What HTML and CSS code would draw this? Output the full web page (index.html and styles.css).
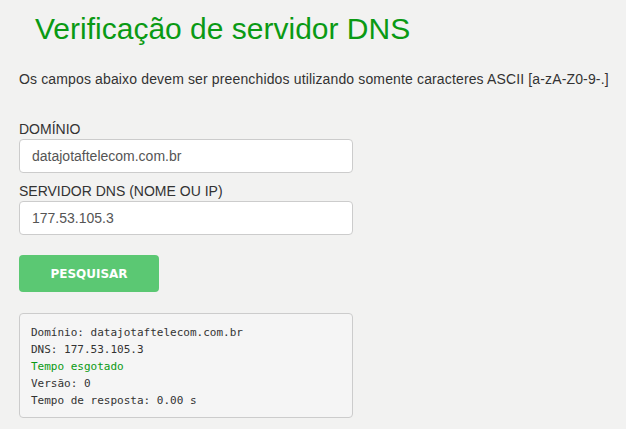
FILE: index.html
```html
<!DOCTYPE html>
<html lang="pt-BR">
<head>
  <meta charset="UTF-8">
  <meta name="viewport" content="width=device-width, initial-scale=1.0">
  <title>Verificação de servidor DNS</title>
  <link rel="stylesheet" href="styles.css">
</head>
<body>
  <h1 class="title">Verificação de servidor DNS</h1>
  <p class="intro">Os campos abaixo devem ser preenchidos utilizando somente caracteres ASCII [a-zA-Z0-9-.]</p>

  <form class="dns-form">
    <label class="field-label" for="domain">DOMÍNIO</label>
    <input class="field-input" id="domain" type="text" value="datajotaftelecom.com.br">

    <label class="field-label" for="server">SERVIDOR DNS (NOME OU IP)</label>
    <input class="field-input" id="server" type="text" value="177.53.105.3">

    <button class="btn-search" type="button">PESQUISAR</button>
  </form>

  <pre class="result">Domínio: datajotaftelecom.com.br
DNS: 177.53.105.3
<span class="result-status">Tempo esgotado</span>
Versão: 0
Tempo de resposta: 0.00 s</pre>
</body>
</html>
```

FILE: styles.css
```css
body {
  margin: 0;
  padding: 0 0 0 19px;
  background: #f2f2f1;
  font-family: "Liberation Sans", Arial, sans-serif;
  color: #333;
}

.title {
  margin: 0;
  padding: 12px 0 0 16px;
  font-size: 30px;
  font-weight: normal;
  line-height: 34px;
  color: #0a9a14;
}

.intro {
  margin: 23px 0 0;
  font-size: 14px;
  line-height: 20px;
  letter-spacing: 0.14px;
  white-space: nowrap;
}

.dns-form {
  margin-top: 30px;
  width: 334px;
}

.field-label {
  display: block;
  font-size: 14px;
  line-height: 20px;
}

.field-input {
  display: block;
  box-sizing: border-box;
  width: 100%;
  height: 34px;
  margin: 0 0 8px;
  padding: 0 12px;
  border: 1px solid #cccccc;
  border-radius: 4px;
  background: #fff;
  font-family: "Liberation Sans", Arial, sans-serif;
  font-size: 14px;
  color: #555;
}

/* margens colapsam com a do input acima */
.btn-search {
  display: block;
  width: 140px;
  height: 37px;
  margin-top: 20px;
  border: none;
  border-radius: 4px;
  background: #5bc873;
  color: #fff;
  font-family: "DejaVu Sans", sans-serif;
  font-size: 12px;
  font-weight: bold;
}

.result {
  box-sizing: border-box;
  width: 334px;
  margin: 21px 0 0;
  padding: 10px 11px 8px;
  border: 1px solid #cccccc;
  border-radius: 4px;
  background: #f5f5f5;
  font-family: "DejaVu Sans Mono", monospace;
  font-size: 11px;
  line-height: 17px;
  color: #333;
}

.result-status {
  color: #0a9a14;
}
```
